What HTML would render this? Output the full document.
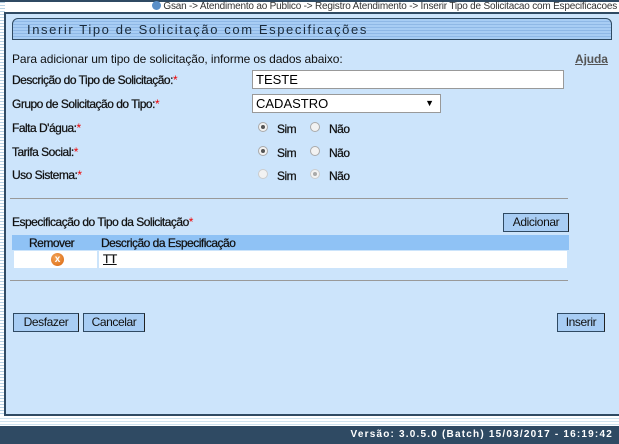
<!DOCTYPE html>
<html><head><meta charset="utf-8"><style>
body{margin:0;width:619px;height:444px;overflow:hidden;background:#fff;font-family:"Liberation Sans",Arial,sans-serif;position:relative}
.stripes{position:absolute;left:0;top:0;width:5px;height:426px;background:repeating-linear-gradient(#fff 0 2px,#b9d3e6 2px 3px)}
.topbar{position:absolute;left:0;top:0;width:619px;height:2px;background:#2f4a63}
.bc{position:absolute;right:2px;top:1px;font-size:10px;color:#333;white-space:nowrap;letter-spacing:-0.2px;border-bottom:1px solid #999;line-height:11px}
.bc i{display:inline-block;width:9px;height:9px;border-radius:50%;background:#5a8fc8;vertical-align:-1px;margin-right:2px}
.panel{position:absolute;left:4px;top:12px;width:620px;height:400px;background:#cce4fb;border:2px solid #2f4a63}
.title{position:absolute;left:6px;top:4px;width:600px;height:22px;border:1px solid #2f4a63;border-radius:6px 6px 0 0;background:repeating-linear-gradient(#a8cdf4 0 2px,#8fb8e6 2px 3px);font-size:13px;letter-spacing:1.6px;color:#1a2a3a;line-height:22px;padding-left:14px;box-sizing:border-box}
.t{position:absolute;font-size:12px;color:#111;white-space:nowrap;letter-spacing:-0.5px;-webkit-text-stroke:0.25px #111}
.n{letter-spacing:-0.1px;-webkit-text-stroke:0}
.r{color:#e00;-webkit-text-stroke:0}
.inp{position:absolute;background:#fff;border:1px solid #999;font-size:13px;padding-left:3px;box-sizing:border-box}
.rad{position:absolute;width:10px;height:10px;border-radius:50%;border:1px solid #aaa;background:#f2f2f2;box-sizing:border-box}
.rad.on::after{content:"";position:absolute;left:2px;top:2px;width:4px;height:4px;border-radius:50%;background:#555}
.rad.dis{border-color:#ccc}
.rad.dis.on::after{background:#aaa}
.btn{position:absolute;background:#a8cdf4;border:1px solid #2f4a63;border-right-color:#222;font-size:12px;color:#111;text-align:center;box-sizing:border-box;line-height:16px;letter-spacing:-0.4px}
.hr{position:absolute;left:10px;width:558px;height:1px;background:#999}
.footer{position:absolute;left:0;top:426px;width:619px;height:18px;background:#2f4a63;color:#fff;font-size:10px;font-weight:bold;letter-spacing:1.2px;text-align:right;line-height:18px;padding-right:6px;box-sizing:border-box}
.fs{position:absolute;left:0;top:416px;width:619px;height:10px;background:repeating-linear-gradient(#fff 0 2px,#cfe3ef 2px 3px)}
</style></head><body>
<div class="stripes"></div>
<div class="topbar"></div>
<div class="bc"><i></i>Gsan -&gt; Atendimento ao Publico -&gt; Registro Atendimento -&gt; Inserir Tipo de Solicitacao com Especificacoes</div>
<div class="panel">
<div class="title">Inserir Tipo de Solicitação com Especificações</div>
</div>
<div class="t n" style="left:12px;top:52px">Para adicionar um tipo de solicitação, informe os dados abaixo:</div>
<div class="t n" style="left:575px;top:52px;color:#555;font-weight:bold;text-decoration:underline">Ajuda</div>
<div class="t" style="left:12px;top:73px">Descrição do Tipo de Solicitação:<span class="r">*</span></div>
<div class="inp" style="left:252px;top:70px;width:312px;height:19px;line-height:17px">TESTE</div>
<div class="t" style="left:12px;top:97px">Grupo de Solicitação do Tipo:<span class="r">*</span></div>
<div class="inp" style="left:252px;top:94px;width:189px;height:19px;line-height:17px">CADASTRO<span style="position:absolute;right:6px;font-size:9px">▼</span></div>
<div class="t" style="left:12px;top:121px">Falta D'água:<span class="r">*</span></div>
<div class="t" style="left:12px;top:145px">Tarifa Social:<span class="r">*</span></div>
<div class="t" style="left:12px;top:168px">Uso Sistema:<span class="r">*</span></div>
<div class="rad on" style="left:258px;top:122px"></div><div class="t" style="left:277px;top:122px">Sim</div>
<div class="rad" style="left:310px;top:122px"></div><div class="t" style="left:329px;top:122px">Não</div>
<div class="rad on" style="left:258px;top:146px"></div><div class="t" style="left:277px;top:146px">Sim</div>
<div class="rad" style="left:310px;top:146px"></div><div class="t" style="left:329px;top:146px">Não</div>
<div class="rad dis" style="left:258px;top:169px"></div><div class="t" style="left:277px;top:169px">Sim</div>
<div class="rad dis on" style="left:310px;top:169px"></div><div class="t" style="left:329px;top:169px">Não</div>
<div class="hr" style="top:198px"></div>
<div class="t" style="left:12px;top:215px">Especificação do Tipo da Solicitação<span class="r">*</span></div>
<div class="btn" style="left:503px;top:213px;width:66px;height:19px">Adicionar</div>
<div style="position:absolute;left:12px;top:235px;width:557px;height:34px;background:#cce4fb">
<div style="position:absolute;left:0;top:0;width:557px;height:15px;background:#8fc2f5"></div>
<div class="t" style="left:17px;top:1px">Remover</div>
<div class="t" style="left:89px;top:1px">Descrição da Especificação</div>
<div style="position:absolute;left:2px;top:16px;width:83px;height:17px;background:#fff"></div>
<div style="position:absolute;left:87px;top:16px;width:468px;height:17px;background:#fff"></div>
<div style="position:absolute;left:39px;top:18px;width:13px;height:13px;border-radius:50%;background:radial-gradient(circle at 40% 35%,#f4a65a,#d9640c);color:#fff;font-size:10px;font-weight:bold;text-align:center;line-height:13px">x</div>
<div class="t" style="left:91px;top:17px;text-decoration:underline">TT</div>
</div>
<div class="hr" style="top:280px"></div>
<div class="btn" style="left:13px;top:313px;width:66px;height:19px">Desfazer</div>
<div class="btn" style="left:83px;top:313px;width:62px;height:19px">Cancelar</div>
<div class="btn" style="left:557px;top:313px;width:48px;height:19px">Inserir</div>
<div class="fs"></div>
<div class="footer">Versão: 3.0.5.0 (Batch) 15/03/2017 - 16:19:42</div>
</body></html>
